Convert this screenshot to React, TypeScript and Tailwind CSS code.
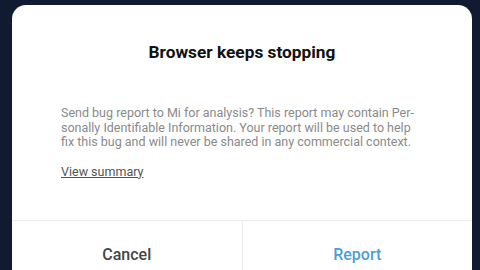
// App.tsx — crash dialog ("Browser keeps stopping") bottom sheet.

import React from 'react';

const FONT = { fontFamily: 'Roboto, "Noto Sans", sans-serif' };

const DialogButton: React.FC<{ label: string; className?: string }> = ({ label, className = '' }) => (
    <button
        type="button"
        className={`flex-1 h-[68px] flex items-center justify-center text-[16px] font-medium ${className}`}
    >
        {label}
    </button>
);

export default function App() {
    return (
        <div className="w-[480px] h-[270px] overflow-hidden bg-[#101b32] pl-[12px] pr-[8px] pt-[5px]" style={FONT}>
            <div className="bg-white rounded-t-[14px] h-[290px] flex flex-col">
                {/* ── Title ───────────────────────────────────────────── */}
                <h2 className="pt-[37px] text-center text-[17.3px] leading-[20px] font-bold text-[#111]">
                    Browser keeps stopping
                </h2>

                {/* ── Body ────────────────────────────────────────────── */}
                <p className="mt-[44px] px-[49px] text-[12.5px] leading-[14.5px] text-[#8a8a8a] whitespace-nowrap">
                    Send bug report to Mi for analysis? This report may contain Per-<br />
                    sonally Identifiable Information. Your report will be used to help<br />
                    fix this bug and will never be shared in any commercial context.
                </p>

                <a href="#summary" className="mt-[15px] ml-[49px] self-start text-[12.5px] leading-[14px] text-[#555] underline">
                    View summary
                </a>

                {/* ── Actions ─────────────────────────────────────────── */}
                <div className="mt-[41px] flex border-t border-[#ececec]">
                    <DialogButton label="Cancel" className="text-[#454545] border-r border-[#ececec]" />
                    <DialogButton label="Report" className="text-[#4b9fd6]" />
                </div>
            </div>
        </div>
    );
}
